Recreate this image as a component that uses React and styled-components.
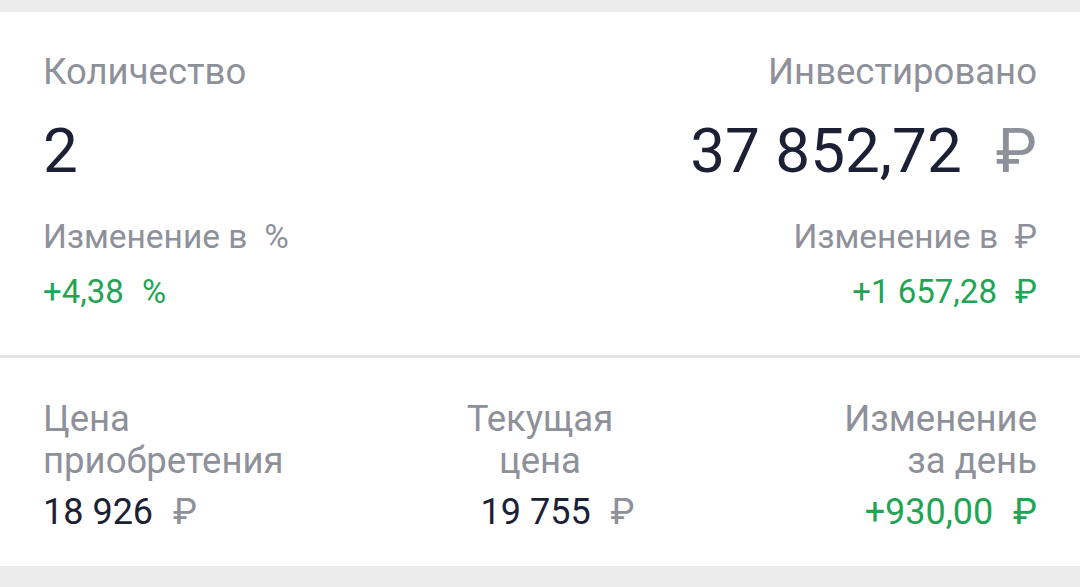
import styled, { createGlobalStyle } from 'styled-components'

const GlobalStyle = createGlobalStyle`
  body {
    margin: 0;
    background: #ececec;
    font-family: Roboto, "Noto Sans", "DejaVu Sans", sans-serif;
  }
`

const Page = styled.div`
  padding: 12px 0 20px;
`

const Card = styled.section`
  background: #ffffff;
`

const TopGrid = styled.div`
  display: grid;
  grid-template-columns: 1fr 1fr;
  padding: 39px 43px 43px;
`

const Column = styled.div`
  display: flex;
  flex-direction: column;
  align-items: ${props => props.$align === 'right' ? 'flex-end' : props.$align === 'center' ? 'center' : 'flex-start'};
  text-align: ${props => props.$align || 'left'};
`

const Caption = styled.div`
  font-size: 36.5px;
  line-height: 42px;
  color: #8e909a;
`

const BigValue = styled.div`
  margin-top: 22px;
  font-size: 62px;
  line-height: 72px;
  color: #1c2034;
`

const SubCaption = styled.div`
  margin-top: 30px;
  font-size: 33.5px;
  line-height: 40px;
  color: #8e909a;
`

const Change = styled.div`
  margin-top: 15px;
  font-size: 33px;
  line-height: 40px;
  color: #22a454;
`

const Unit = styled.span`
  margin-left: ${props => props.$gap || 0.55}em;
  color: ${props => props.$muted ? '#8e909a' : 'inherit'};
`

const Divider = styled.hr`
  margin: 0;
  border: 0;
  height: 3px;
  background: #e2e2e2;
`

const BottomGrid = styled.div`
  display: grid;
  grid-template-columns: 1fr 1fr 1fr;
  padding: 40px 43px 33px;
`

const Label = styled.div`
  font-size: 36.5px;
  line-height: 42px;
  color: #8e909a;
`

const Value = styled.div`
  margin-top: 9px;
  font-size: 36px;
  line-height: 42px;
  color: ${props => props.$positive ? '#22a454' : '#1c2034'};
  padding-left: ${props => props.$shift || 0}px;
`

export default function App() {
  return (
    <Page>
      <GlobalStyle />
      <Card>
        <TopGrid>
          <Column>
            <Caption>Количество</Caption>
            <BigValue>2</BigValue>
            <SubCaption>Изменение в <Unit $gap={0.25}>%</Unit></SubCaption>
            <Change>+4,38<Unit>%</Unit></Change>
          </Column>
          <Column $align="right">
            <Caption>Инвестировано</Caption>
            <BigValue>37 852,72<Unit $muted>₽</Unit></BigValue>
            <SubCaption>Изменение в <Unit $gap={0.25}>₽</Unit></SubCaption>
            <Change>+1 657,28<Unit>₽</Unit></Change>
          </Column>
        </TopGrid>
        <Divider />
        <BottomGrid>
          <Column>
            <Label>Цена<br />приобретения</Label>
            <Value>18 926<Unit $muted>₽</Unit></Value>
          </Column>
          <Column $align="center">
            <Label>Текущая<br />цена</Label>
            <Value $shift={35}>19 755<Unit $muted>₽</Unit></Value>
          </Column>
          <Column $align="right">
            <Label>Изменение<br />за день</Label>
            <Value $positive>+930,00<Unit>₽</Unit></Value>
          </Column>
        </BottomGrid>
      </Card>
    </Page>
  )
}
